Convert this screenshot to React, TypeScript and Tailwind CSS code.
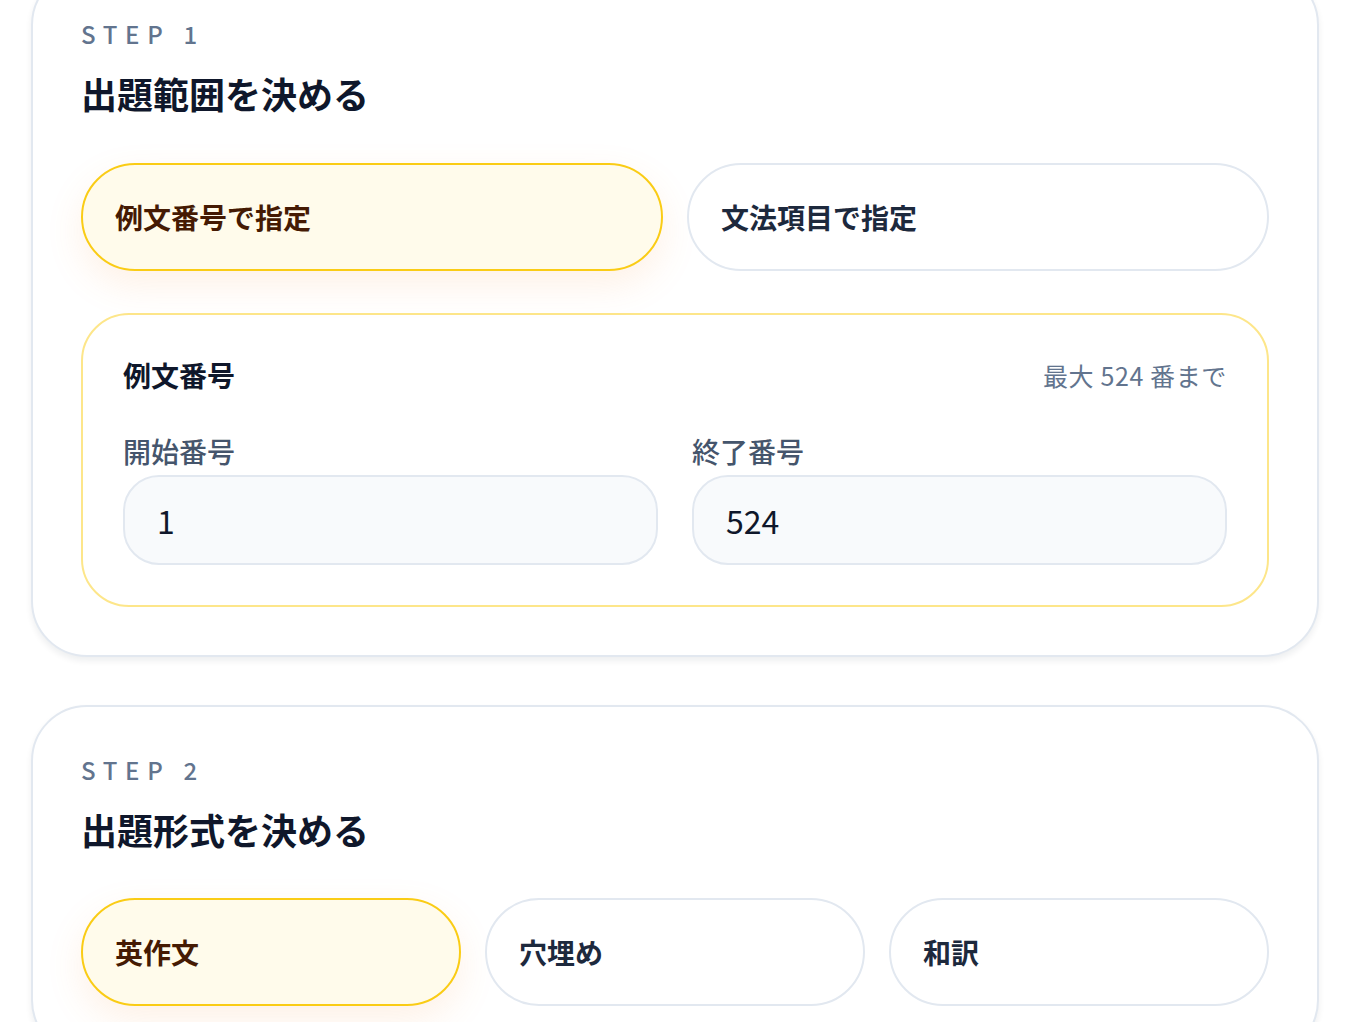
import React from "react";

const font = { fontFamily: '"Noto Sans CJK JP", "Noto Sans", sans-serif' };

type OptionProps = {
  label: string;
  selected?: boolean;
};

const Option = ({ label, selected }: OptionProps) => (
  <button
    className={
      selected
        ? "flex items-center rounded-full border-2 border-[#facc15] bg-[#fffbeb] px-8 py-8 text-left text-[28px] font-bold leading-10 text-[#451a03] shadow-[0_14px_36px_rgba(251,146,60,0.13)]"
        : "flex items-center rounded-full border-2 border-slate-200 bg-white px-8 py-8 text-left text-[28px] font-bold leading-10 text-slate-800"
    }
  >
    {label}
  </button>
);

const StepHeader = ({ step, title }: { step: number; title: string }) => (
  <div>
    <p className="text-[24px] font-medium uppercase leading-[30px] tracking-[0.32em] text-slate-500">
      Step {step}
    </p>
    <h2 className="mt-[20px] text-[36px] font-bold leading-[48px] text-slate-900">
      {title}
    </h2>
  </div>
);

const NumberField = ({ label, value }: { label: string; value: string }) => (
  <label className="flex flex-col gap-1">
    <span className="text-[28px] font-medium leading-10 text-slate-600">{label}</span>
    <input
      readOnly
      value={value}
      className="h-[90px] w-full rounded-[36px] border-2 border-slate-200 bg-slate-50 px-8 text-[32px] text-slate-900 outline-none"
    />
  </label>
);

export default function App() {
  return (
    <div className="min-h-screen bg-white pb-20" style={font}>
      <div className="ml-[31px] mt-[-31px] flex w-[1288px] flex-col gap-12">
        {/* STEP 1 */}
        <section className="rounded-[56px] border-2 border-slate-200 bg-white p-12 shadow-[0_4px_6px_rgba(15,23,42,0.07)]">
          <StepHeader step={1} title="出題範囲を決める" />

          <div className="mt-[46px] grid grid-cols-2 gap-6">
            <Option label="例文番号で指定" selected />
            <Option label="文法項目で指定" />
          </div>

          <div className="mt-[42px] rounded-[48px] border-2 border-[#fde68a] bg-white p-10">
            <div className="flex items-center justify-between">
              <h3 className="text-[28px] font-bold leading-10 text-slate-900">例文番号</h3>
              <span className="text-[25px] leading-8 tracking-wide text-slate-500">最大 524 番まで</span>
            </div>
            <div className="mt-9 grid grid-cols-2 gap-[34px]">
              <NumberField label="開始番号" value="1" />
              <NumberField label="終了番号" value="524" />
            </div>
          </div>
        </section>

        {/* STEP 2 */}
        <section className="rounded-[56px] border-2 border-slate-200 bg-white p-12 shadow-[0_4px_6px_rgba(15,23,42,0.07)]">
          <StepHeader step={2} title="出題形式を決める" />

          <div className="mt-[45px] grid grid-cols-3 gap-6">
            <Option label="英作文" selected />
            <Option label="穴埋め" />
            <Option label="和訳" />
          </div>
        </section>
      </div>
    </div>
  );
}
